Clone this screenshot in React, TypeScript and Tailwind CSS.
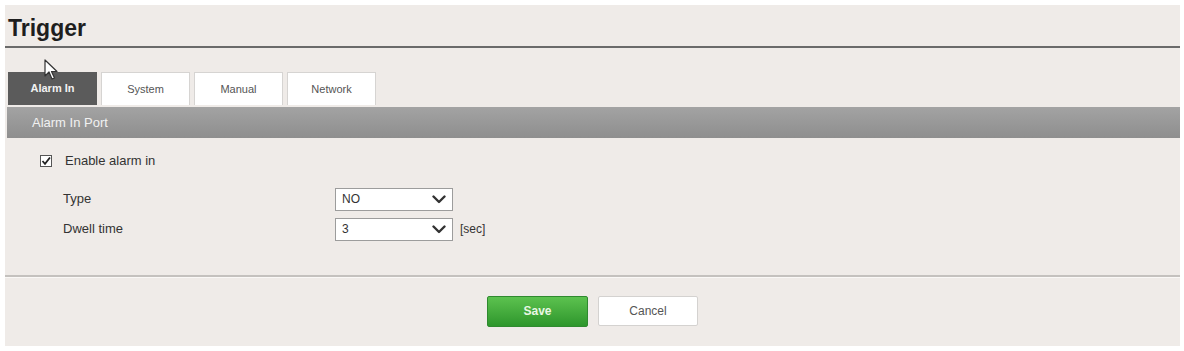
const tabs = ["Alarm In", "System", "Manual", "Network"];

const Chevron = () => (
  <svg width="14" height="9" viewBox="0 0 14 9" className="mr-[6px]">
    <path d="M1.5 1.5 L7 7 L12.5 1.5" fill="none" stroke="#333" strokeWidth="2.4" strokeLinecap="round" strokeLinejoin="round" />
  </svg>
);

const SelectBox = ({ value }: { value: string }) => (
  <div className="flex h-[23px] w-[118px] items-center justify-between border border-[#9c9c9c] bg-white pl-[6px] text-[12px] text-[#333]">
    <span>{value}</span>
    <Chevron />
  </div>
);

export default function App() {
  return (
    <div className="h-[351px] w-[1184px] bg-white pl-[5px] pt-[5px] font-['Liberation_Sans',Arial,sans-serif]">
      <div className="relative h-[341px] w-[1175px] bg-[#efebe8]">
        {/* header */}
        <div className="h-[43px] border-b-[2px] border-[#6a6a6a] pl-[3px] pt-[10px]">
          <h1 className="text-[23px] font-bold leading-[26px] text-[#1e1e1e]">Trigger</h1>
        </div>

        {/* tabs */}
        <div className="mt-[24px] flex gap-[4px] pl-[3px]">
          {tabs.map((t, i) => (
            <div
              key={t}
              className={
                i === 0
                  ? "flex h-[33px] w-[89px] items-center justify-center bg-[#5b5b5b] text-[11px] font-bold text-[#f2f2f2]"
                  : "flex h-[33px] w-[89px] items-center justify-center border border-b-0 border-[#d6d4d2] bg-white text-[11px] text-[#555]"
              }
            >
              {t}
            </div>
          ))}
        </div>

        {/* section bar */}
        <div className="ml-[2px] mt-[2px] flex h-[31px] items-center bg-gradient-to-b from-[#a3a3a3] to-[#8e8e8e] pl-[25px] text-[13px] text-[#f1f1f1]">
          Alarm In Port
        </div>

        {/* form */}
        <div className="pl-[35px] pt-[13px]">
          <label className="flex items-center gap-[13px] text-[13px] text-[#333]">
            <span className="flex h-[12px] w-[12px] items-center justify-center border border-[#555] bg-white">
              <svg width="10" height="10" viewBox="0 0 10 10">
                <path d="M1.5 5 L4 7.8 L9 1.5" fill="none" stroke="#222" strokeWidth="1.8" />
              </svg>
            </span>
            Enable alarm in
          </label>

          <div className="mt-[17px] flex flex-col gap-[7px] pl-[23px] text-[13px] text-[#333]">
            <div className="flex items-center">
              <span className="w-[272px]">Type</span>
              <SelectBox value="NO" />
            </div>
            <div className="flex items-center">
              <span className="w-[272px]">Dwell time</span>
              <SelectBox value="3" />
              <span className="ml-[7px] text-[12px]">[sec]</span>
            </div>
          </div>
        </div>

        {/* footer */}
        <div className="mt-[34px] border-t-[2px] border-[#c4c1be]">
          <div className="h-[1px] bg-[#faf8f6]" />
          <div className="flex justify-center gap-[10px] pt-[18px]">
            <button className="h-[31px] w-[101px] rounded-[2px] border border-[#2f8a2f] bg-gradient-to-b from-[#5cc24f] to-[#2d962c] text-[12px] font-bold text-[#e9f7e4]">
              Save
            </button>
            <button className="h-[30px] w-[100px] rounded-[2px] border border-[#d4d2d0] bg-white text-[12px] text-[#555]">
              Cancel
            </button>
          </div>
        </div>

        {/* mouse cursor */}
        <svg className="absolute left-[39px] top-[54px]" width="14" height="22" viewBox="0 0 14 22">
          <path d="M1 1 L1 17 L5 13 L8 20 L10.5 19 L7.5 12.5 L13 12.5 Z" fill="#fff" stroke="#333" strokeWidth="1.2" strokeLinejoin="round" />
        </svg>
      </div>
    </div>
  );
}
